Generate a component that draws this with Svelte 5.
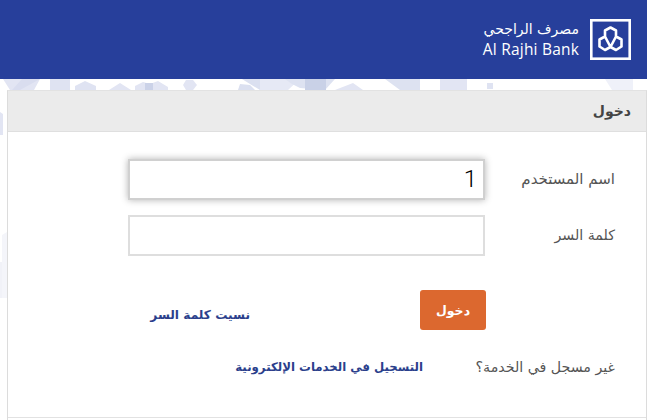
<script>
  const hexes = [
    { p: '3,79 40,79 34,90 10,90', c: '#e2e5f3' },
    { p: '40,79 20,90 12,90 22,79', c: '#d9ddef' },
    { p: '50,79 70,79 70,90 50,90', c: '#dfe3f2' },
    { p: '75,86 85,81 96,86 96,90 75,90', c: '#dfe3f2' },
    { p: '109,90 120,83 131,90', c: '#e2e5f3' },
    { p: '135,86 143,82 150,84 158,81 168,87 168,90 135,90', c: '#e2e5f3' },
    { p: '145,83 153,83 153,90 145,90', c: '#cbd2e8' },
    { p: '186,80 193,80 197,85 193,90 186,90 183,85', c: '#e2e5f3' },
    { p: '240,84 250,85 255,90 238,90', c: '#dbe0f0' },
    { p: '242,79 260,79 260,90 250,84', c: '#dbe0f0' },
    { p: '260,79 300,79 288,90 260,90', c: '#e6e9f5' },
    { p: '285,79 335,79 325,90 300,88 292,84', c: '#dde2f1' },
    { p: '305,79 326,79 326,90 305,90', c: '#c9d1e7' },
    { p: '335,90 353,83 363,90', c: '#e2e5f3' },
    { p: '385,79 420,79 420,90 400,90', c: '#dde2f1' },
    { p: '440,79 467,79 467,90 440,90', c: '#e2e5f3' },
    { p: '487,83 493,83 493,89 487,89', c: '#dfe3f2' },
    { p: '605,79 633,79 633,90 612,90', c: '#eff1f9' },
    { p: '0,112 3,114 3,135 0,135', c: '#e2e5f3' },
    { p: '2,235 7,232 7,298 2,298', c: '#f4f5fa' },
    { p: '0,262 2,262 2,298 0,298', c: '#f1f2f8' }
  ];
</script>

<div class="page">
  <svg class="decor" width="647" height="420" viewBox="0 0 647 420" aria-hidden="true">
    {#each hexes as h}
      <polygon points={h.p} fill={h.c} />
    {/each}
  </svg>

  <header class="topbar">
    <div class="brand">
      <svg class="mark" width="41" height="41" viewBox="0 0 41 41" aria-hidden="true">
        <rect x="1.3" y="1.3" width="38.4" height="38.4" fill="none" stroke="#fff" stroke-width="2.6" />
        <path d="M20.5 8.5 L26 11.5 L26 17.5 L31.5 20.5 L31.5 27.5 L26 31 L20.5 28 L15 31 L9.5 27.5 L9.5 20.5 L15 17.5 L15 11.5 Z M15 17.5 L20.5 28 L26 17.5" fill="none" stroke="#fff" stroke-width="2.6" stroke-linejoin="round" />
      </svg>
      <div class="names">
        <div class="ar" dir="rtl">مصرف الراجحي</div>
        <div class="en">Al Rajhi Bank</div>
      </div>
    </div>
  </header>

  <section class="panel" dir="rtl">
    <h1 class="panel-title">دخول</h1>
    <form class="form">
      <div class="row first">
        <label class="label wide" for="user">اسم المستخدم</label>
        <input id="user" class="field focus" value="1" autocomplete="off" />
      </div>
      <div class="row second">
        <label class="label" for="pass">كلمة السر</label>
        <input id="pass" class="field" type="password" />
      </div>
      <div class="actions">
        <button class="submit" type="button">دخول</button>
        <a class="link forgot" href="#forgot">نسيت كلمة السر</a>
      </div>
      <div class="register">
        <span class="label">غير مسجل في الخدمة؟</span>
        <a class="link reg" href="#register">التسجيل في الخدمات الإلكترونية</a>
      </div>
    </form>
  </section>
</div>

<style>
  :global(body) {
    margin: 0;
    background: #fff;
    overflow: hidden;
  }
  .page {
    position: relative;
    width: 647px;
    height: 420px;
    overflow: hidden;
    font-family: "DejaVu Sans", "Noto Sans", sans-serif;
    color: #444;
  }
  .decor {
    position: absolute;
    inset: 0;
    filter: blur(0.7px);
  }
  .topbar {
    position: relative;
    height: 79px;
    background: #273f9b;
    display: flex;
    justify-content: flex-end;
    align-items: flex-start;
  }
  .brand {
    display: flex;
    gap: 11px;
    flex-direction: row-reverse;
    margin: 19px 16px 0 0;
    color: #fff;
  }
  .mark {
    display: block;
  }
  .names {
    text-align: right;
    width: 100px;
  }
  .ar {
    font-size: 14px;
    line-height: 20px;
    white-space: nowrap;
  }
  .en {
    font-family: "Open Sans", sans-serif;
    font-size: 15.5px;
    line-height: 20px;
    white-space: nowrap;
    letter-spacing: 0.2px;
  }
  .panel {
    position: relative;
    margin: 11px 0 0 7px;
    height: 330px;
    background: #fff;
    border: 1px solid #dcdcdc;
    border-top-color: #e2e2e2;
    border-bottom: 0;
    box-sizing: border-box;
  }
  .panel-title {
    margin: 0;
    height: 41px;
    box-sizing: border-box;
    background: #ebebeb;
    border-bottom: 1px solid #dfdfdf;
    padding: 0 15px;
    font-size: 14px;
    font-weight: 700;
    line-height: 40px;
    color: #444;
  }
  .form {
    height: 286px;
    box-sizing: border-box;
    border-bottom: 1px solid #e2e2e2;
    padding: 27px 31px 0 0;
  }
  .row {
    display: flex;
    align-items: center;
    height: 40px;
  }
  .second {
    margin-top: 16px;
  }
  .label {
    width: 130px;
    flex: none;
    font-size: 14.2px;
    color: #555;
    white-space: nowrap;
  }
  .label.wide {
    font-size: 15px;
  }
  .field {
    width: 357px;
    height: 41px;
    box-sizing: border-box;
    border: 2px solid #dedede;
    background: #fff;
    padding: 0 6px;
    font-family: "Roboto", sans-serif;
    font-size: 24px;
    font-weight: 300;
    color: #000;
    text-align: right;
    outline: none;
  }
  .focus {
    border-color: #d0d0d0;
    box-shadow: 0 0 7px rgba(0, 0, 0, 0.3);
  }
  .actions {
    display: flex;
    align-items: center;
    gap: 170px;
    margin-top: 35px;
    padding-right: 129px;
  }
  .submit {
    width: 66px;
    height: 40px;
    border: 0;
    border-radius: 3px;
    background: #dc682f;
    color: #fff;
    font-family: inherit;
    font-size: 12.5px;
    font-weight: 700;
    padding: 0;
  }
  .link {
    font-size: 12.2px;
    font-weight: 700;
    color: #2b3f8c;
    text-decoration: none;
    white-space: nowrap;
  }
  .forgot {
    margin-top: 10px;
  }
  .reg {
    font-size: 11.75px;
  }
  .register {
    display: flex;
    align-items: center;
    margin-top: 29px;
  }
  .register .label {
    width: 192px;
  }
</style>
